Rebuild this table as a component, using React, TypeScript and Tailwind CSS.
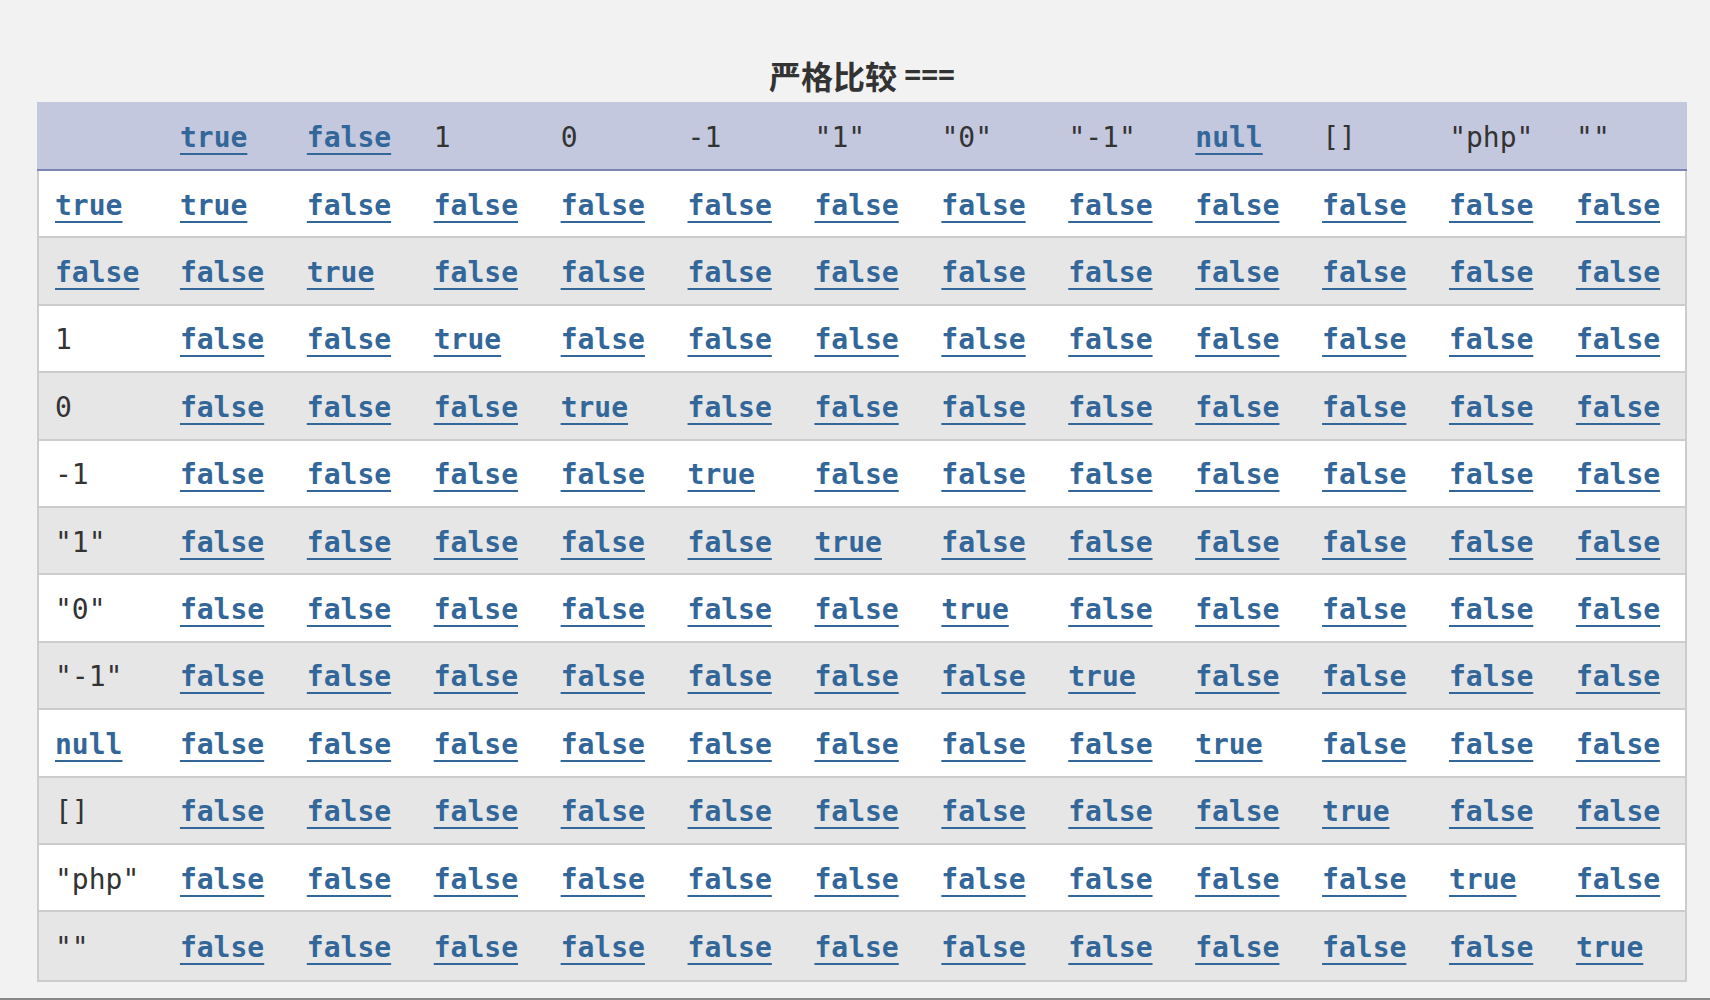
const MONO = "font-['DejaVu_Sans_Mono','Liberation_Mono',monospace]";

type Val = { text: string; link?: boolean };

const labels: Val[] = [
  { text: 'true', link: true },
  { text: 'false', link: true },
  { text: '1' },
  { text: '0' },
  { text: '-1' },
  { text: '"1"' },
  { text: '"0"' },
  { text: '"-1"' },
  { text: 'null', link: true },
  { text: '[]' },
  { text: '"php"' },
  { text: '""' },
];

function Cell({ v }: { v: Val }) {
  return (
    <div className="flex items-center pl-4 pt-[4px]">
      {v.link ? (
        <a
          href="#"
          className={`${MONO} text-[28px] leading-[32px] font-bold text-[#336699] underline decoration-2 underline-offset-[6px]`}
        >
          {v.text}
        </a>
      ) : (
        <span className={`${MONO} text-[28px] leading-[32px] text-[#333] whitespace-pre`}>{v.text}</span>
      )}
    </div>
  );
}

export default function App() {
  return (
    <div className="min-h-screen flex flex-col bg-[#f2f2f2]">
      <div className="flex-1 pl-[37px] pt-[50px]">
        <div className="w-[1650px]">
          <h2 className="h-[50px] mb-[2px] flex items-center justify-center text-[#333] font-bold">
            <span className="text-[32px] font-['Noto_Sans_CJK_SC','Noto_Sans',sans-serif]">严格比较&nbsp;</span>
            <span className={`${MONO} text-[28px]`}>===</span>
          </h2>

          <div className="grid grid-cols-[repeat(13,minmax(0,1fr))] h-[69px] bg-[#c4c8de] border-b-2 border-[#7c86b6]">
            <div />
            {labels.map((v) => (
              <Cell key={v.text} v={v} />
            ))}
          </div>

          <div className="border-x-2 border-b-2 border-[#cccccc]">
            {labels.map((row, r) => (
              <div
                key={row.text}
                className={`grid grid-cols-[124.92px_repeat(11,126.92px)_124.92px] h-[67.4px] ${
                  r < labels.length - 1 ? 'border-b-2 border-[#cccccc]' : ''
                } ${r % 2 === 0 ? 'bg-white' : 'bg-[#e6e6e6]'}`}
              >
                <Cell v={row} />
                {labels.map((_, c) => (
                  <Cell key={c} v={{ text: c === r ? 'true' : 'false', link: true }} />
                ))}
              </div>
            ))}
          </div>
        </div>
      </div>
      <div className="h-[2px] bg-[#888]" />
    </div>
  );
}
